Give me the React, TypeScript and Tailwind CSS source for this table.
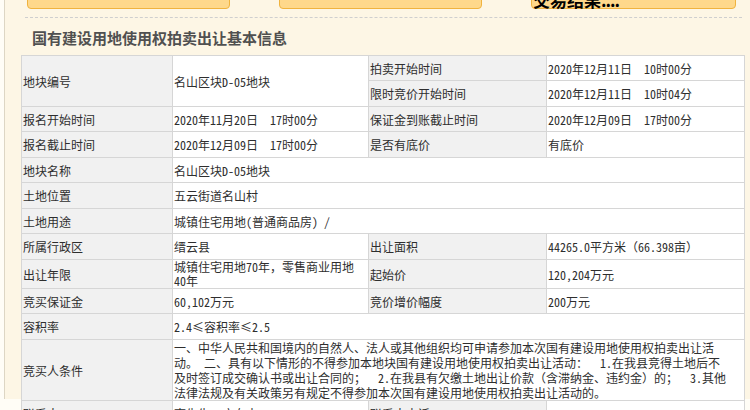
import type { ReactNode } from 'react';

const cjk = "font-['Noto_Sans_Mono_CJK_SC','Noto_Sans_CJK_SC',sans-serif]";

function L({ children, rs, h }: { children?: ReactNode; rs?: number; h?: number }) {
  return (
    <td rowSpan={rs} style={h ? { height: h } : undefined} className="border border-[#d6d6d6] bg-[#f1f1f1] pl-[1px] align-middle">
      {children}
    </td>
  );
}

function V({ children, rs, cs }: { children?: ReactNode; rs?: number; cs?: number }) {
  return (
    <td rowSpan={rs} colSpan={cs} className="border border-[#d6d6d6] bg-white pl-[1px] align-middle">
      {children}
    </td>
  );
}

export default function App() {
  return (
    <div className={`w-[750px] h-[410px] overflow-hidden bg-[#fffdf6] text-[12px] text-[#2e2e2e] ${cjk}`}>
      <div className="ml-[4px] h-full border-l border-[#ddd6c4] bg-[#fdf6e5]">
        <div className="-mt-[11px] flex gap-[49px] pl-[22px]">
          <div className="h-[20px] w-[203px] rounded-b-[4px] border border-[#f0b33e] bg-[#fed88b]" />
          <div className="h-[20px] w-[203px] rounded-b-[4px] border border-[#f0b33e] bg-[#fed88b]" />
          <div className="flex h-[20px] w-[205px] items-center rounded-b-[4px] border border-[#f0b33e] bg-[#fed88b] pl-[1px] font-['Noto_Sans_CJK_SC',sans-serif] text-[17px] font-bold leading-none text-black">
            交易结果<span className="tracking-[-1px]">....</span>
          </div>
        </div>
        <div className="mt-[8px] ml-[20px] mr-[8px] border-t border-dashed border-[#cfcfcf]" />
        <div className="mt-[10px] pl-[27px] text-[15px] font-bold leading-[20px] text-[#505050]">
          国有建设用地使用权拍卖出让基本信息
        </div>
        <table className="mt-[7px] ml-[16px] w-[723px] table-fixed border-collapse leading-[15px]">
          <colgroup>
            <col className="w-[151px]" />
            <col className="w-[196px]" />
            <col className="w-[178px]" />
            <col className="w-[198px]" />
          </colgroup>
          <tbody>
            <tr>
              <L rs={2}>地块编号</L>
              <V rs={2}>名山区块D-05地块</V>
              <L h={25}>拍卖开始时间</L>
              <V>2020年12月11日&nbsp; 10时00分</V>
            </tr>
            <tr>
              <L h={26}>限时竞价开始时间</L>
              <V>2020年12月11日&nbsp; 10时04分</V>
            </tr>
            <tr>
              <L h={25}>报名开始时间</L>
              <V>2020年11月20日&nbsp; 17时00分</V>
              <L>保证金到账截止时间</L>
              <V>2020年12月09日&nbsp; 17时00分</V>
            </tr>
            <tr>
              <L h={26}>报名截止时间</L>
              <V>2020年12月09日&nbsp; 17时00分</V>
              <L>是否有底价</L>
              <V>有底价</V>
            </tr>
            <tr>
              <L h={25}>地块名称</L>
              <V cs={3}>名山区块D-05地块</V>
            </tr>
            <tr>
              <L h={26}>土地位置</L>
              <V cs={3}>五云街道名山村</V>
            </tr>
            <tr>
              <L h={25}>土地用途</L>
              <V cs={3}>城镇住宅用地(普通商品房) /</V>
            </tr>
            <tr>
              <L h={26}>所属行政区</L>
              <V>缙云县</V>
              <L>出让面积</L>
              <V>44265.0平方米（66.398亩）</V>
            </tr>
            <tr>
              <L h={29}>出让年限</L>
              <V>
                <div className="leading-[14px]">城镇住宅用地70年，零售商业用地<br />40年</div>
              </V>
              <L>起始价</L>
              <V>120,204万元</V>
            </tr>
            <tr>
              <L h={25}>竞买保证金</L>
              <V>60,102万元</V>
              <L>竞价增价幅度</L>
              <V>200万元</V>
            </tr>
            <tr>
              <L h={26}>容积率</L>
              <V cs={3}>2.4≤容积率≤2.5</V>
            </tr>
            <tr>
              <L h={61}>竞买人条件</L>
              <V cs={3}>
                <div className="whitespace-nowrap leading-[15px]">
                  一、中华人民共和国境内的自然人、法人或其他组织均可申请参加本次国有建设用地使用权拍卖出让活<br />
                  动。 二、具有以下情形的不得参加本地块国有建设用地使用权拍卖出让活动：&nbsp; 1.在我县竞得土地后不<br />
                  及时签订成交确认书或出让合同的；&nbsp; 2.在我县有欠缴土地出让价款（含滞纳金、违约金）的；&nbsp; 3.其他<br />
                  法律法规及有关政策另有规定不得参加本次国有建设用地使用权拍卖出让活动的。
                </div>
              </V>
            </tr>
            <tr>
              <L h={26}>联系人</L>
              <V>李先生、应女士</V>
              <L>联系人电话</L>
              <V>0578-3315634；13758393819</V>
            </tr>
          </tbody>
        </table>
      </div>
    </div>
  );
}
